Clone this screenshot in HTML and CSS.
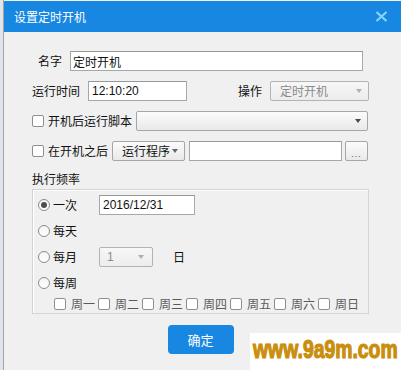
FILE: index.html
```html
<!DOCTYPE html>
<html lang="zh-CN">
<head>
    <meta charset="UTF-8">
    <meta name="viewport" content="width=device-width, initial-scale=1.0">
    <title>设置定时开机</title>
    <link rel="stylesheet" href="styles.css">
</head>
<body>
    <div class="dialog">
        <div class="titlebar">
            <span class="title">设置定时开机</span>
            <svg class="close" width="13" height="11" viewBox="0 0 13 11">
                <path d="M1.5 1 L11.5 10 M11.5 1 L1.5 10" stroke="#84d3fb" stroke-width="2.3" fill="none"/>
            </svg>
        </div>

        <div class="content">
            <div class="row">
                <label class="lbl lbl-name">名字</label>
                <input class="txt w-name" type="text" value="定时开机">
            </div>

            <div class="row">
                <label class="lbl">运行时间</label>
                <input class="txt num w-time" type="text" value="12:10:20">
                <span class="spacer"></span>
                <label class="lbl">操作</label>
                <div class="select disabled w-op"><span>定时开机</span><i class="arrow"></i></div>
            </div>

            <div class="row">
                <input class="cb" type="checkbox">
                <label class="lbl lbl-cb">开机后运行脚本</label>
                <div class="select w-script"><i class="arrow"></i></div>
            </div>

            <div class="row">
                <input class="cb" type="checkbox">
                <label class="lbl lbl-cb">在开机之后</label>
                <div class="select w-prog"><span>运行程序</span><i class="arrow small"></i></div>
                <input class="txt w-path" type="text" value="">
                <button class="dots">...</button>
            </div>

            <div class="section-title">执行频率</div>

            <div class="group">
                <div class="opt">
                    <span class="radio checked"></span>
                    <span class="opt-lbl">一次</span>
                    <input class="txt num w-date" type="text" value="2016/12/31">
                </div>
                <div class="opt">
                    <span class="radio"></span>
                    <span class="opt-lbl">每天</span>
                </div>
                <div class="opt">
                    <span class="radio"></span>
                    <span class="opt-lbl">每月</span>
                    <div class="select disabled w-day"><span class="num">1</span><i class="arrow"></i></div>
                    <span class="day">日</span>
                </div>
                <div class="opt last">
                    <span class="radio"></span>
                    <span class="opt-lbl">每周</span>
                </div>
                <div class="week">
                    <input class="cb" type="checkbox"><span class="wd">周一</span>
                    <input class="cb" type="checkbox"><span class="wd">周二</span>
                    <input class="cb" type="checkbox"><span class="wd">周三</span>
                    <input class="cb" type="checkbox"><span class="wd">周四</span>
                    <input class="cb" type="checkbox"><span class="wd">周五</span>
                    <input class="cb" type="checkbox"><span class="wd">周六</span>
                    <input class="cb" type="checkbox"><span class="wd">周日</span>
                </div>
            </div>

            <button class="btn-ok">确定</button>
        </div>

        <div class="watermark"><span>www.9a9m.com</span></div>
    </div>
</body>
</html>
```

FILE: styles.css
```css
body {
    margin: 0;
    background: #dfe4ea;
    font-family: "Noto Sans CJK SC", sans-serif;
    font-size: 12px;
    color: #111;
}
.dialog {
    position: relative;
    margin-left: 3px;
    width: 397px;
    height: 370px;
    background: #f0f0f0;
    border-left: 1px solid #a3a3a3;
    overflow: hidden;
}
.titlebar {
    display: flex;
    align-items: center;
    height: 31px;
    margin-top: 1px;
    padding-left: 10px;
    background: #1787e1;
    color: #fff;
}
.title {
    font-size: 12px;
    line-height: 16px;
}
.close {
    margin-left: auto;
    margin-right: 13px;
}
.content {
    padding: 19px 32px 0 28px;
}
.row {
    display: flex;
    align-items: center;
    height: 20px;
    margin-bottom: 10px;
}
.lbl {
    line-height: 16px;
    margin-right: 8px;
    white-space: nowrap;
}
.lbl-name {
    padding-left: 6px;
}
.lbl-cb {
    margin-right: 4px;
}
.spacer {
    flex: 1;
}
.txt {
    box-sizing: border-box;
    height: 20px;
    margin: 0;
    padding: 0 2px;
    border: 1px solid #a7a7a7;
    border-top-color: #999;
    background: #fff;
    font-family: "Noto Sans CJK SC", sans-serif;
    font-size: 12px;
    color: #111;
    outline: none;
}
.num {
    font-family: "Liberation Sans", sans-serif;
}
.w-name { width: 293px; }
.w-time { width: 99px; padding-left: 3px; }
.w-path { width: 153px; margin-right: 3px; }
.w-date { width: 96px; padding-left: 3px; }

.select {
    box-sizing: border-box;
    display: flex;
    align-items: center;
    height: 20px;
    padding: 0 6px 0 9px;
    border: 1px solid #a6a6a6;
    border-radius: 2px;
    background: linear-gradient(#fbfbfb, #e9e9e9);
    line-height: 16px;
    white-space: nowrap;
    flex: none;
}
.select.disabled {
    color: #8a8a8a;
    border-color: #b3b3b3;
    background: linear-gradient(#f7f7f7, #ececec);
}
.arrow {
    margin-left: auto;
    width: 0;
    height: 0;
    border-left: 3.5px solid transparent;
    border-right: 3.5px solid transparent;
    border-top: 4px solid #4a4a4a;
}
.disabled .arrow {
    border-top-color: #b0b0b0;
}
.arrow.small {
    margin-left: 2px;
    border-top-color: #666;
}
.w-op { width: 99px; }
.w-script { width: 232px; margin-left: auto; margin-right: 1px; }
.w-prog { width: 73px; margin-right: 4px; padding: 0 4px 0 9px; }
.w-day { width: 54px; padding-left: 7px; padding-right: 8px; }

.cb {
    appearance: none;
    -webkit-appearance: none;
    box-sizing: border-box;
    width: 12px;
    height: 12px;
    margin: 0 4px 0 0;
    border: 1px solid #8e8e8e;
    border-radius: 2px;
    background: #fff;
    flex: none;
}
.dots {
    box-sizing: border-box;
    width: 23px;
    height: 20px;
    padding: 6px 0 0;
    border: 1px solid #a6a6a6;
    border-radius: 2px;
    background: linear-gradient(#fbfbfb, #e9e9e9);
    font-family: "Liberation Sans", sans-serif;
    font-size: 9px;
    letter-spacing: 1px;
    color: #555;
}

.section-title {
    height: 16px;
    line-height: 16px;
    margin-bottom: 2px;
}
.group {
    box-sizing: border-box;
    width: 337px;
    padding: 5px 0 1px 5px;
    border: 1px solid #d4d4d4;
    box-shadow: inset 1px 1px 0 #fff;
}
.opt {
    display: flex;
    align-items: center;
    height: 20px;
    margin-bottom: 6px;
}
.opt.last {
    margin-bottom: 3px;
}
.radio {
    box-sizing: border-box;
    position: relative;
    width: 12px;
    height: 12px;
    margin-right: 3px;
    border: 1px solid #8c8c8c;
    border-radius: 50%;
    background: linear-gradient(#f4f4f4, #fff);
    flex: none;
}
.radio.checked::after {
    content: "";
    position: absolute;
    left: 2px;
    top: 2px;
    width: 6px;
    height: 6px;
    border-radius: 50%;
    background: #4e4e4e;
}
.opt-lbl {
    width: 46px;
    line-height: 16px;
}
.day {
    margin-left: 20px;
    line-height: 16px;
}
.week {
    display: flex;
    align-items: center;
    height: 16px;
    padding-left: 16px;
}
.week .cb {
    margin-right: 5px;
}
.wd {
    width: 24px;
    margin-right: 3px;
    line-height: 16px;
    color: #5a5a5a;
}

.btn-ok {
    display: block;
    width: 66px;
    height: 29px;
    margin: 11px auto 0;
    border: none;
    border-radius: 4px;
    background: #1787e1;
    color: #fff;
    font-family: "Noto Sans CJK SC", sans-serif;
    font-size: 13px;
}

.watermark {
    position: absolute;
    right: 0;
    bottom: 0;
    width: 148px;
    height: 37px;
    padding-left: 3px;
    background: #fff;
    overflow: hidden;
}
.watermark span {
    display: inline-block;
    font-family: "Liberation Sans", sans-serif;
    font-weight: bold;
    font-size: 25px;
    line-height: 32px;
    color: #c98e0b;
    -webkit-text-stroke: 1.2px #c98e0b;
    transform: scaleX(0.775);
    transform-origin: left center;
    white-space: nowrap;
}
```
